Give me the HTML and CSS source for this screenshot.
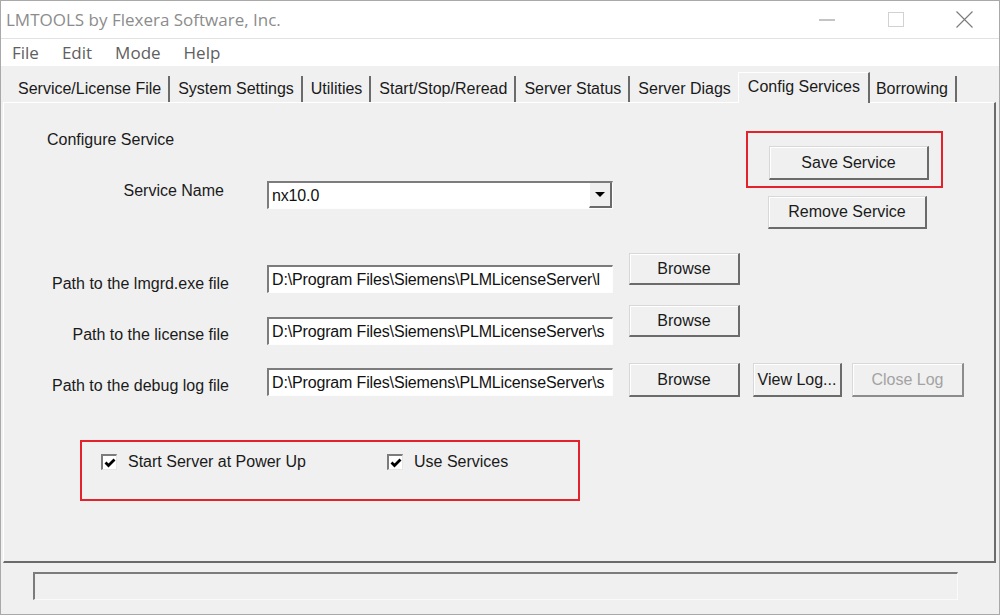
FILE: index.html
```html
<!DOCTYPE html>
<html lang="en">
<head>
    <meta charset="UTF-8">
    <meta name="viewport" content="width=device-width, initial-scale=1.0">
    <title>LMTOOLS by Flexera Software, Inc.</title>
    <link rel="stylesheet" href="styles.css">
</head>
<body>
    <div class="window">
        <!-- Title bar -->
        <div class="titlebar">
            <span class="title">LMTOOLS by Flexera Software, Inc.</span>
            <div class="controls">
                <div class="ctrl">
                    <svg width="16" height="2" viewBox="0 0 16 2"><line x1="0" y1="1" x2="16" y2="1" stroke="#8a8a8a" stroke-width="1"/></svg>
                </div>
                <div class="ctrl">
                    <svg width="16" height="15" viewBox="0 0 16 15"><rect x="0.5" y="0.5" width="15" height="14" fill="none" stroke="#d2d2d2" stroke-width="1"/></svg>
                </div>
                <div class="ctrl">
                    <svg width="17" height="17" viewBox="0 0 17 17"><path d="M0.5 0.5 L16.5 16.5 M16.5 0.5 L0.5 16.5" stroke="#7a7a7a" stroke-width="1.1"/></svg>
                </div>
            </div>
        </div>

        <div class="menubar">
            <span class="menu-item">File</span>
            <span class="menu-item">Edit</span>
            <span class="menu-item">Mode</span>
            <span class="menu-item">Help</span>
        </div>

        <!-- Tabs -->
        <div class="tabs">
            <div class="tab">Service/License File</div>
            <div class="tab">System Settings</div>
            <div class="tab">Utilities</div>
            <div class="tab">Start/Stop/Reread</div>
            <div class="tab">Server Status</div>
            <div class="tab">Server Diags</div>
            <div class="tab active">Config Services</div>
            <div class="tab">Borrowing</div>
        </div>

        <div class="panel">
            <div class="top-section">
                <div class="config-left">
                    <div class="section-title">Configure Service</div>
                    <div class="service-row">
                        <div class="service-label">Service Name</div>
                        <div class="combo">
                            <span class="field-text">nx10.0</span>
                            <div class="combo-btn"><span class="arrow"></span></div>
                        </div>
                    </div>
                </div>
                <div class="config-right">
                    <div class="highlight-box">
                        <button class="btn btn-save">Save Service</button>
                    </div>
                    <button class="btn btn-remove">Remove Service</button>
                </div>
            </div>

            <div class="path-rows">
                <div class="path-row row-lmgrd">
                    <div class="path-label">Path to the lmgrd.exe file</div>
                    <div class="field"><span class="field-text">D:\Program Files\Siemens\PLMLicenseServer\l</span></div>
                    <button class="btn btn-browse">Browse</button>
                </div>
                <div class="path-row row-license">
                    <div class="path-label">Path to the license file</div>
                    <div class="field"><span class="field-text">D:\Program Files\Siemens\PLMLicenseServer\s</span></div>
                    <button class="btn btn-browse">Browse</button>
                </div>
                <div class="path-row row-debug">
                    <div class="path-label">Path to the debug log file</div>
                    <div class="field"><span class="field-text">D:\Program Files\Siemens\PLMLicenseServer\s</span></div>
                    <button class="btn btn-browse">Browse</button>
                    <button class="btn btn-viewlog">View Log...</button>
                    <button class="btn btn-closelog" disabled>Close Log</button>
                </div>
            </div>

            <!-- Startup options -->
            <div class="checks">
                <label class="check-item first">
                    <span class="checkbox">
                        <svg width="12" height="12" viewBox="0 0 12 12"><polyline points="1.5,5.5 4.5,8.5 10.5,2.5" fill="none" stroke="#000" stroke-width="2.8"/></svg>
                    </span>
                    <span class="check-text">Start Server at Power Up</span>
                </label>
                <label class="check-item">
                    <span class="checkbox">
                        <svg width="12" height="12" viewBox="0 0 12 12"><polyline points="1.5,5.5 4.5,8.5 10.5,2.5" fill="none" stroke="#000" stroke-width="2.8"/></svg>
                    </span>
                    <span class="check-text">Use Services</span>
                </label>
            </div>
        </div>

        <div class="statusbar">
            <div class="status-field"></div>
        </div>
    </div>
</body>
</html>
```

FILE: styles.css
```css
* {
    box-sizing: border-box;
    margin: 0;
    padding: 0;
}

body {
    font-family: 'Liberation Sans', Arial, sans-serif;
    background-color: #f0f0f0;
    color: #1a1a1a;
    font-size: 16px;
}

.window {
    width: 1000px;
    height: 615px;
    border: 1px solid #a9a9a9;
    background-color: #f0f0f0;
    overflow: hidden;
}

/* Title bar and menu */
.titlebar {
    height: 38px;
    background-color: #fff;
    border-bottom: 1px solid #e2e2e2;
    display: flex;
    align-items: center;
}

.title {
    font-family: 'Open Sans', 'Liberation Sans', sans-serif;
    font-size: 17px;
    color: #8c8c8c;
    padding-left: 5px;
}

.controls {
    margin-left: auto;
    display: flex;
    height: 100%;
}

.ctrl {
    width: 69px;
    display: flex;
    align-items: center;
    justify-content: center;
}

.menubar {
    height: 27px;
    background-color: #fff;
    display: flex;
    align-items: center;
    gap: 23px;
    padding-left: 11px;
}

.menu-item {
    font-family: 'Open Sans', 'Liberation Sans', sans-serif;
    font-size: 17px;
    color: #606060;
}

/* Tabs */
.tabs {
    height: 36px;
    display: flex;
    align-items: flex-end;
    padding-left: 9px;
    position: relative;
    z-index: 1;
}

.tab {
    height: 26px;
    padding: 3px 7px 0 8px;
    line-height: 20px;
    border-right: 2px solid #6b6b6b;
    white-space: nowrap;
}

.tab.active {
    height: 31px;
    padding: 4px 8px 0 9px;
    margin: 0 -2px -1px -2px;
    border-top: 1px solid #fff;
    border-left: 1px solid #fff;
    background-color: #f0f0f0;
    position: relative;
}

.panel {
    margin-left: 2px;
    width: 993px;
    height: 461px;
    border-top: 1px solid #fff;
    border-left: 1px solid #fff;
    border-right: 2px solid #6b6b6b;
    border-bottom: 2px solid #6b6b6b;
}

/* Service section */
.top-section {
    display: flex;
    align-items: flex-start;
}

.config-left {
    flex: 1;
    padding-top: 27px;
}

.section-title {
    padding-left: 43px;
    line-height: 20px;
}

.service-row {
    display: flex;
    align-items: flex-start;
    margin-top: 31px;
}

.service-label {
    width: 220px;
    text-align: right;
    line-height: 20px;
}

.combo,
.field {
    height: 28px;
    background-color: #fff;
    border-top: 2px solid #7c7c7c;
    border-left: 2px solid #7c7c7c;
    border-right: 1px solid #fdfdfd;
    border-bottom: 1px solid #fdfdfd;
    display: flex;
    align-items: center;
    overflow: hidden;
    white-space: nowrap;
}

.combo {
    margin-left: 43px;
    width: 346px;
}

.field-text {
    padding-left: 3px;
    color: #111;
    letter-spacing: -0.15px;
}

.combo-btn {
    margin-left: auto;
    width: 23px;
    height: 26px;
    margin-top: -1px;
    background-color: #f0f0f0;
    border-top: 1px solid #fff;
    border-left: 1px solid #fff;
    border-right: 2px solid #6b6b6b;
    border-bottom: 2px solid #6b6b6b;
    display: flex;
    align-items: center;
    justify-content: center;
}

.arrow {
    width: 0;
    height: 0;
    border-left: 5px solid transparent;
    border-right: 5px solid transparent;
    border-top: 5px solid #000;
}

.config-right {
    margin-top: 28px;
    margin-right: 51px;
    width: 197px;
}

.highlight-box {
    height: 57px;
    border: 2px solid #e3222c;
    padding: 13px 0 0 21px;
}

/* Buttons */
.btn {
    font-family: 'Liberation Sans', Arial, sans-serif;
    font-size: 16px;
    color: #1a1a1a;
    background-color: #f0f0f0;
    border-top: 1px solid #d8d8d8;
    border-left: 1px solid #d8d8d8;
    border-right: 2px solid #6b6b6b;
    border-bottom: 2px solid #6b6b6b;
    box-shadow: inset 1px 1px 0 #fff;
    white-space: nowrap;
}

.btn-save {
    width: 160px;
    height: 34px;
}

.btn-remove {
    width: 159px;
    height: 33px;
    margin-top: 8px;
    margin-left: 22px;
}

/* Path rows */
.path-rows {
    margin-top: 24px;
}

.path-row {
    display: flex;
    align-items: flex-start;
}

.path-label {
    width: 225px;
    text-align: right;
    line-height: 20px;
}

.field {
    margin-left: 38px;
    width: 346px;
}

.btn-browse {
    margin-left: 16px;
    width: 111px;
    height: 32px;
}

.row-lmgrd .path-label { margin-top: 21px; }
.row-lmgrd .field { margin-top: 12px; }

.row-license { margin-top: 11px; }
.row-license .path-label { margin-top: 20px; }
.row-license .field { margin-top: 12px; }

.row-debug { margin-top: 18px; }
.row-debug .path-label { margin-top: 13px; }
.row-debug .field { margin-top: 5px; }
.row-debug .btn { height: 34px; }

.btn-viewlog {
    margin-left: 13px;
    width: 89px;
    padding: 0;
}

.btn-closelog {
    margin-left: 10px;
    width: 112px;
    color: #a3a3a3;
    border-right-color: #8c8c8c;
    border-bottom-color: #8c8c8c;
}

/* Checkbox group */
.checks {
    margin-top: 43px;
    margin-left: 76px;
    width: 500px;
    height: 61px;
    border: 2px solid #e3222c;
    padding: 12px 0 0 19px;
    display: flex;
    align-items: flex-start;
}

.check-item {
    display: flex;
    align-items: center;
    height: 16px;
}

.check-item.first {
    width: 286px;
}

.checkbox {
    width: 16px;
    height: 16px;
    background-color: #fff;
    border-top: 2px solid #7c7c7c;
    border-left: 2px solid #7c7c7c;
    border-right: 1px solid #e6e6e6;
    border-bottom: 1px solid #e6e6e6;
    display: flex;
    align-items: center;
    justify-content: center;
}

.check-text {
    margin-left: 11px;
    line-height: 20px;
}

/* Status bar */
.statusbar {
    height: 51px;
    padding: 9px 0 0 32px;
}

.status-field {
    width: 925px;
    height: 28px;
    border-top: 2px solid #7c7c7c;
    border-left: 2px solid #7c7c7c;
    border-right: 1px solid #fafafa;
    border-bottom: 1px solid #fafafa;
}
```
